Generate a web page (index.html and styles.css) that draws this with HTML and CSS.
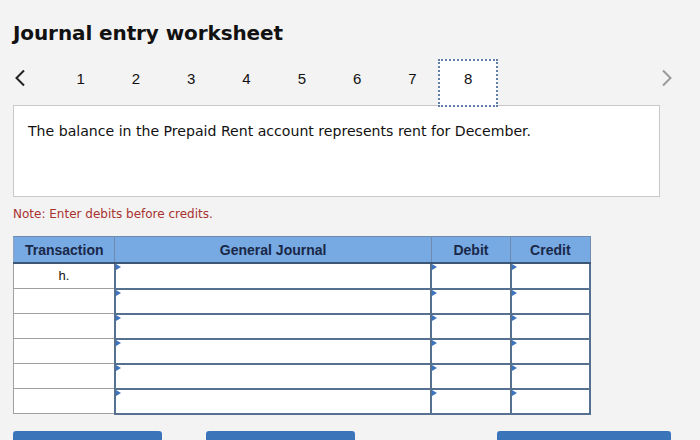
FILE: index.html
```html
<!DOCTYPE html>
<html>
<head>
<meta charset="utf-8">
<link rel="stylesheet" href="styles.css">
</head>
<body>
<div class="page">
  <h1 class="title">Journal entry worksheet</h1>
  <div class="nav">
    <span class="arrow left">
      <svg width="12" height="18" viewBox="0 0 12 18"><path d="M10 1.5 L2.5 9 L10 16.5" fill="none" stroke="#222" stroke-width="2"/></svg>
    </span>
    <div class="steps">
      <span class="step">1</span>
      <span class="step">2</span>
      <span class="step">3</span>
      <span class="step">4</span>
      <span class="step">5</span>
      <span class="step">6</span>
      <span class="step">7</span>
      <span class="step active">8</span>
    </div>
    <span class="arrow right">
      <svg width="12" height="18" viewBox="0 0 12 18"><path d="M2 1.5 L9.5 9 L2 16.5" fill="none" stroke="#9a9a9a" stroke-width="2"/></svg>
    </span>
  </div>
  <div class="prompt">The balance in the Prepaid Rent account represents rent for December.</div>
  <p class="note">Note: Enter debits before credits.</p>
  <table class="journal">
    <thead>
      <tr>
        <th class="c-tr">Transaction</th>
        <th class="c-gj">General Journal</th>
        <th class="c-dr">Debit</th>
        <th class="c-cr">Credit</th>
      </tr>
    </thead>
    <tbody>
      <tr><td class="tr">h.</td><td class="in"></td><td class="in"></td><td class="in"></td></tr>
      <tr><td class="tr"></td><td class="in"></td><td class="in"></td><td class="in"></td></tr>
      <tr><td class="tr"></td><td class="in"></td><td class="in"></td><td class="in"></td></tr>
      <tr><td class="tr"></td><td class="in"></td><td class="in"></td><td class="in"></td></tr>
      <tr><td class="tr"></td><td class="in"></td><td class="in"></td><td class="in"></td></tr>
      <tr><td class="tr"></td><td class="in"></td><td class="in"></td><td class="in"></td></tr>
    </tbody>
  </table>
  <div class="buttons">
    <span class="btn b1"></span>
    <span class="btn b2"></span>
    <span class="spacer"></span>
    <span class="btn b3"></span>
  </div>
</div>
</body>
</html>
```
FILE: styles.css
```css
html, body {
  margin: 0;
  padding: 0;
  background: #f3f3f3;
}
.page {
  padding: 19px 13px 0 13px;
  width: 674px;
  height: 421px;
  overflow: hidden;
}
.title {
  margin: 0;
  font-family: "DejaVu Sans", Verdana, sans-serif;
  font-weight: bold;
  font-size: 20px;
  line-height: 28px;
  color: #111;
  letter-spacing: -0.1px;
}
.nav {
  margin-top: 12px;
  height: 46px;
  display: flex;
  align-items: flex-start;
  width: 660px;
}
.arrow {
  display: flex;
  align-items: center;
  height: 38px;
}
.arrow.left { width: 39px; padding-left: 1px; }
.arrow.right { margin-left: auto; }
.steps {
  display: flex;
  align-items: flex-start;
}
.step {
  width: 55.3px;
  height: 38px;
  display: flex;
  align-items: center;
  justify-content: center;
  font-family: "Liberation Sans", Arial, sans-serif;
  font-size: 15px;
  color: #111;
}
.step.active {
  box-sizing: border-box;
  width: 60px;
  height: 48px;
  margin: 0 0 0 -2px;
  border: 2px dotted #5f7fa6;
  background: #fff;
  padding-bottom: 9px;
}
.prompt {
  box-sizing: border-box;
  width: 647px;
  height: 92px;
  background: #fff;
  border: 1px solid #c9c9c9;
  padding: 15px 14px;
  font-family: "DejaVu Sans", sans-serif;
  font-size: 14.1px;
  color: #111;
  line-height: 20px;
}
.note {
  margin: 9px 0 0 0;
  font-family: "DejaVu Sans", sans-serif;
  font-size: 12px;
  line-height: 16px;
  color: #a8322f;
}
.journal {
  margin-top: 14px;
  border-collapse: collapse;
  width: 578px;
  font-family: "Liberation Sans", Arial, sans-serif;
}
.journal th {
  background: #77a9e2;
  color: #1a2848;
  font-size: 14px;
  font-weight: bold;
  height: 25px;
  padding: 0;
  border: 1px solid #6f8bb0;
  border-left: 1px solid #34506f;
  border-bottom: 2px solid #3c5676;
}
.journal th.c-tr { width: 100px; border-left: 1px solid #8ea3bf; }
.journal th.c-gj { width: 314px; }
.journal th.c-dr { width: 78px; }
.journal th.c-cr { width: 78px; }
.journal td {
  height: 22px;
  padding: 0;
  background: #fff;
}
.journal td.tr {
  border: 1px solid #a0a0a0;
  text-align: center;
  font-size: 13px;
  color: #111;
  vertical-align: middle;
  padding-bottom: 2px;
}
.journal td.in {
  border: 2.5px solid #56708f;
  position: relative;
}
.journal td.in::before {
  content: "";
  position: absolute;
  left: 0;
  top: 0;
  width: 0;
  height: 0;
  border-top: 3.5px solid transparent;
  border-bottom: 3.5px solid transparent;
  border-left: 5px solid #3d74bd;
}
.buttons {
  margin-top: 16px;
  display: flex;
  width: 658px;
}
.btn {
  display: block;
  height: 20px;
  background: #3c74ba;
  border-radius: 3px 3px 0 0;
}
.b1 { width: 149px; }
.b2 { width: 149px; margin-left: 44px; }
.spacer { flex: 1; }
.b3 { width: 174px; }
```
